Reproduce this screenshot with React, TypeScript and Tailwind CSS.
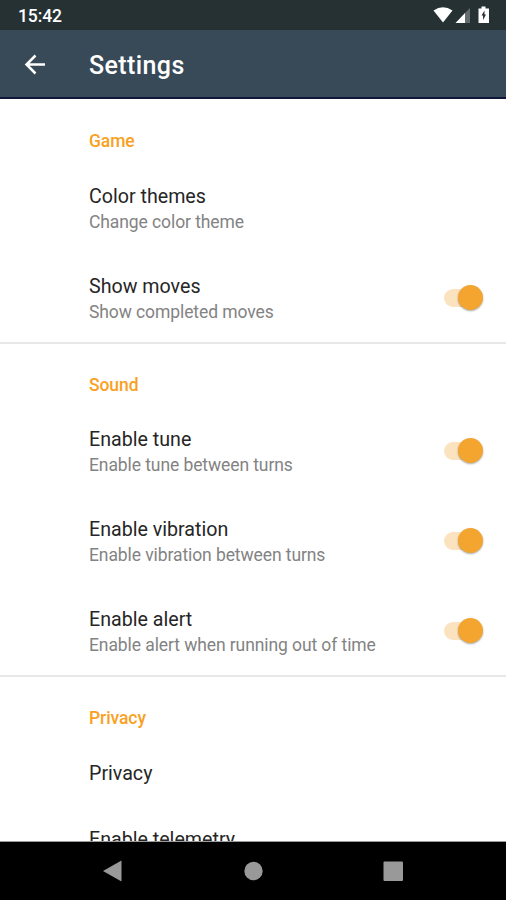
import React from 'react'

const Switch = () => {
  return (
    <div className="relative w-[39px] h-[28px] shrink-0">
      <div className="absolute left-0 top-[5px] w-[34px] h-[18px] rounded-full bg-[#fce3c0]"></div>
      <div className="absolute right-0 top-[1px] w-[25px] h-[25px] rounded-full bg-[#f3a530] shadow-[0_1px_2px_rgba(0,0,0,0.35)]"></div>
    </div>
  )
}

const Row = ({ title, text, on }: { title: string; text?: string; on?: boolean }) => {
  return (
    <div className="flex items-center justify-between h-[90px] pl-[89px] pr-[23px]">
      <div>
        <div className="text-[19.65px] leading-[26px] pt-px text-[#262626]">{title}</div>
        {text && <div className="text-[17.5px] tracking-[-0.09px] leading-[24px] text-[#838383]">{text}</div>}
      </div>
      {on && <Switch />}
    </div>
  )
}

const Heading = ({ children }: { children: string }) => {
  return <div className="h-[63px] pt-[31px] first:pt-[30px] pl-[89px] text-[17.5px] tracking-[-0.09px] leading-[22px] font-medium text-[#f9a11f]">{children}</div>
}

const Divider = () => <div className="h-[2px] -my-px bg-[#e8e8e8]"></div>

const App = () => {
  return (
    <div className="flex flex-col w-[506px] h-[900px] overflow-hidden bg-white font-[Roboto,sans-serif]">
      <div className="h-[30px] shrink-0 bg-[#263134] flex items-center justify-between pl-[18px] pr-[15px] text-white">
        <div className="text-[17.5px] tracking-[-0.1px] font-medium pt-[2px]">15:42</div>
        <svg width="58" height="20" viewBox="0 0 58 20" fill="#fff">
          <path d="M0.500 5.500Q10 -1 19.500 5.500L10 17.500Z" />
          <path d="M31 9L37 3V18H31Z" fill="#636b6e" />
          <path d="M22.500 18L32 8V18Z" />
          <path d="M45.500 3.500H48.500V1.500H52.500V3.500H56V18H45.500Z" />
          <path d="M51.500 5.500L48.500 10.500H50V15L53 9.500H51.500Z" fill="#263134" />
        </svg>
      </div>
      <div className="h-[69px] shrink-0 bg-[#384a57] border-b-2 border-[#10163a] flex items-center text-white">
        <svg className="ml-[23px]" width="24" height="24" viewBox="0 0 24 24" fill="none" stroke="#fff" strokeWidth="2.5">
          <path d="M22 12.500H4M12.500 3.500L3.500 12.500L12.500 21.500" />
        </svg>
        <div className="ml-[42px] pt-[5px] text-[25px] tracking-[0.4px] font-medium">Settings</div>
      </div>
      <div className="flex-1 min-h-0 overflow-hidden pt-px border-b border-[#9a9a9a]">
        <Heading>Game</Heading>
        <Row title="Color themes" text="Change color theme" />
        <Row title="Show moves" text="Show completed moves" on />
        <Divider />
        <Heading>Sound</Heading>
        <Row title="Enable tune" text="Enable tune between turns" on />
        <Row title="Enable vibration" text="Enable vibration between turns" on />
        <Row title="Enable alert" text="Enable alert when running out of time" on />
        <Divider />
        <Heading>Privacy</Heading>
        <div className="pl-[89px] pt-[22px] text-[19.65px] leading-[26px] text-[#262626]">Privacy</div>
        <div className="pl-[89px] pt-[40px] text-[19.65px] leading-[26px] text-[#262626]">Enable telemetry</div>
      </div>
      <div className="h-[58px] shrink-0 bg-black flex items-center">
        <svg width="506" height="58" viewBox="0 0 506 58" fill="#999999">
          <path d="M103 29L121.500 18.500V39.500Z" />
          <circle cx="253.500" cy="29" r="9.200" />
          <rect x="383.500" y="19.500" width="19.500" height="19.500" rx="1" />
        </svg>
      </div>
    </div>
  )
}

export default App
